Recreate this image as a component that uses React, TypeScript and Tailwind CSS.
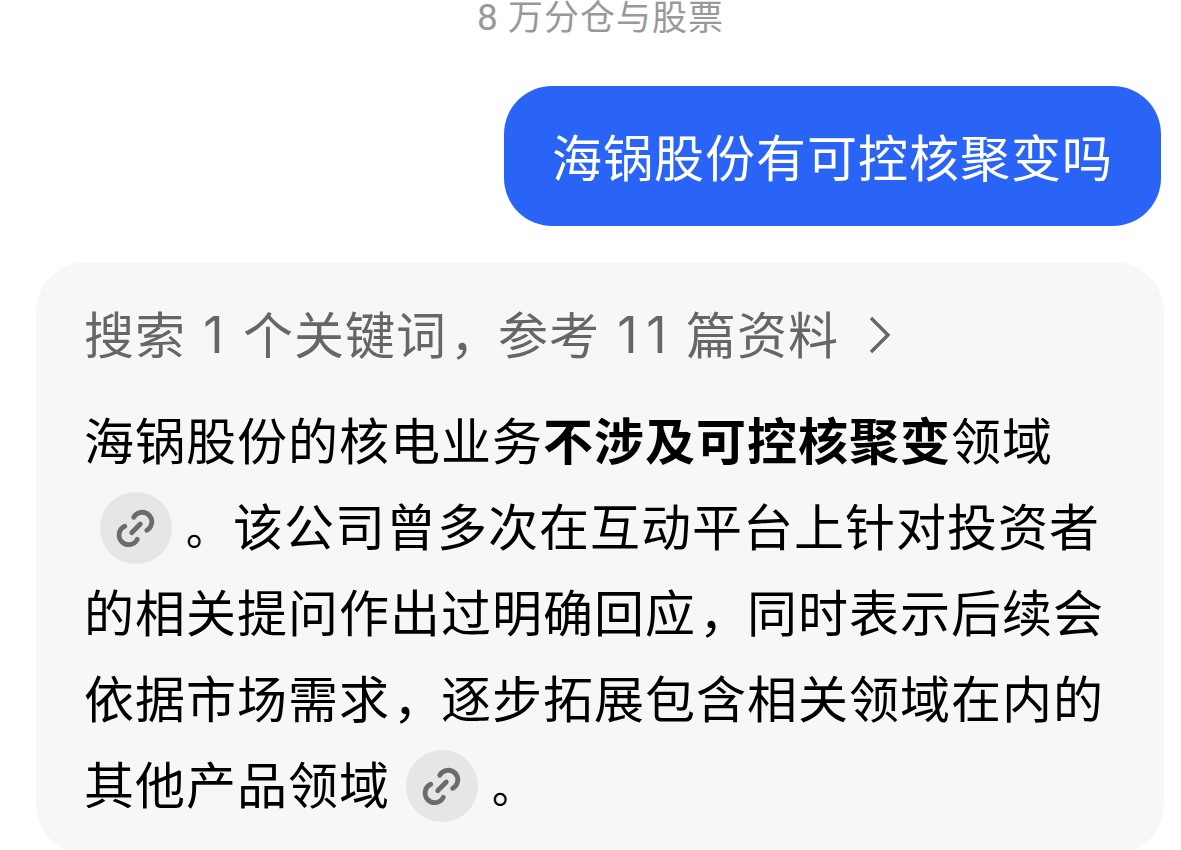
import type { ReactNode } from 'react';

function LinkBadge() {
  return (
    <span className="mt-2 mr-3 ml-4 flex h-[72px] w-[72px] shrink-0 items-center justify-center rounded-full bg-[#e6e6e6]">
      <svg width="72" height="72" viewBox="0 0 72 72" fill="none" stroke="#6b6b6b" strokeWidth="4.8" strokeLinecap="round">
        <path d="M33.7 25.3A9.6 9.6 0 1 1 46.7 38.3" />
        <path d="M24.7 34.3A9.6 9.6 0 1 0 37.3 47.3" />
        <path d="M31.7 40.8 40.3 32" />
      </svg>
    </span>
  );
}

function Line({ children }: { children: ReactNode }) {
  return <div className="flex h-[86px] items-center pb-1.5 whitespace-nowrap">{children}</div>;
}

function FullStop() {
  return <span className="mt-1.5 w-[49px] pl-0.5 text-[42px]">。</span>;
}

function Comma() {
  return <span className="inline-block w-[51px] pl-[3px] leading-none">，</span>;
}

function Digits({ value, className }: { value: string; className: string }) {
  return (
    <span className={`flex pt-1.5 font-['Inter',sans-serif] font-normal tracking-normal ${className}`}>
      {value.split('').map((digit, index) => (
        <span key={index} className="w-[29px] text-center">
          {digit}
        </span>
      ))}
    </span>
  );
}

export default function App() {
  return (
    <main className="flex h-[850px] w-[1181px] flex-col overflow-hidden bg-white font-['Noto_Sans_CJK_SC',sans-serif] text-[50px] leading-[86px] tracking-[1px]">
      <header className="flex h-[86px] shrink-0 items-start pl-[477px] text-[35px] leading-[30px] text-[#999999]">
        <span className="w-[31px] pt-[3px] font-['Roboto',sans-serif] text-[37px] tracking-normal">8</span>
        <span>万分仓与股票</span>
      </header>
      <div className="mr-5 flex h-[140px] shrink-0 items-center self-end rounded-[48px] bg-[#2a64f6] px-12 pb-[3px] text-white">
        海锅股份有可控核聚变吗
      </div>
      <section className="mt-9 ml-9 flex h-[592px] w-[1128px] shrink-0 flex-col rounded-[50px] bg-[#f7f7f7] pt-[30px] pl-12 text-black">
        <div className="mb-5 flex h-[86px] items-center pb-1.5 whitespace-nowrap text-[#666666]">
          <span>搜索</span>
          <Digits value="1" className="mr-[15px] ml-[13px]" />
          <span>个关键词<Comma />参考</span>
          <Digits value="11" className="mr-[15px] ml-[13px]" />
          <span>篇资料</span>
          <svg className="mt-1.5 ml-[29px]" width="24" height="44" viewBox="0 0 24 44" fill="none" stroke="#666666" strokeWidth="3.4">
            <path d="M3 5 20 22 3 39" />
          </svg>
        </div>
        <Line>
          <span>海锅股份的核电业务</span>
          <strong className="font-bold">不涉及可控核聚变</strong>
          <span>领域</span>
        </Line>
        <Line>
          <LinkBadge />
          <FullStop />
          <span>该公司曾多次在互动平台上针对投资者</span>
        </Line>
        <Line>
          <span>的相关提问作出过明确回应<Comma />同时表示后续会</span>
        </Line>
        <Line>
          <span>依据市场需求<Comma />逐步拓展包含相关领域在内的</span>
        </Line>
        <Line>
          <span>其他产品领域</span>
          <LinkBadge />
          <FullStop />
        </Line>
      </section>
    </main>
  );
}
